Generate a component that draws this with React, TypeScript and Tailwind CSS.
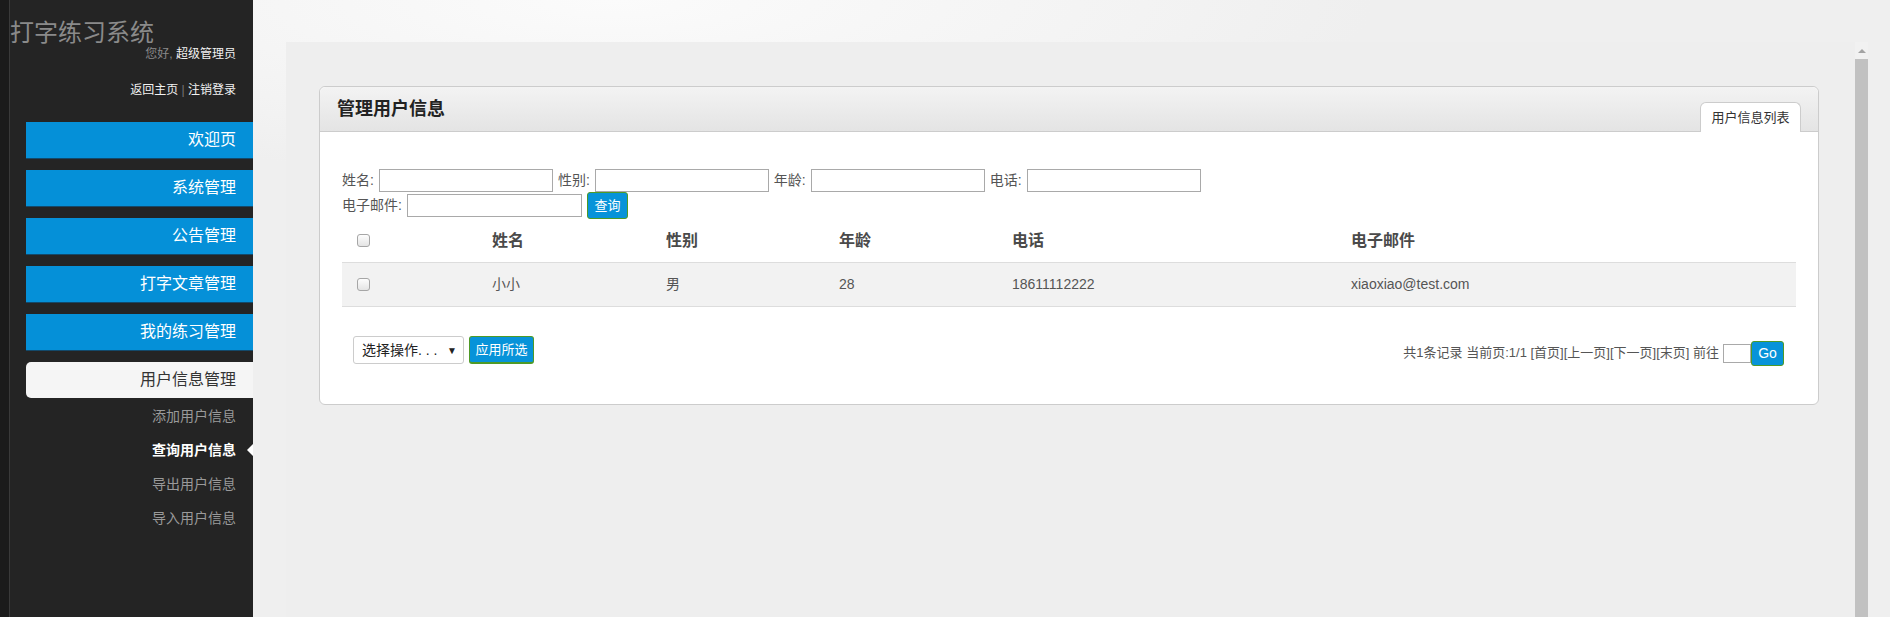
import React from "react";

const navItems = ["欢迎页", "系统管理", "公告管理", "打字文章管理", "我的练习管理"];
const subItems = [
  { label: "添加用户信息", active: false },
  { label: "查询用户信息", active: true },
  { label: "导出用户信息", active: false },
  { label: "导入用户信息", active: false },
];

const users = [
  { name: "小小", sex: "男", age: "28", phone: "18611112222", email: "xiaoxiao@test.com" },
];

function Sidebar() {
  return (
    <aside className="w-[253px] shrink-0 bg-[#1b1b1b] pl-[9px]">
      <div className="h-full border-l border-[#3a3a3a] bg-[#242424]">
        <div className="pt-[21px] text-[24px] leading-[24px] text-[#8a8a8a]">打字练习系统</div>
        <div className="mt-[2px] pr-[17px] text-right text-[12px] leading-[14px]">
          <span className="text-[#8a8a8a]">您好, </span>
          <span className="text-[#f2f2f2]">超级管理员</span>
        </div>
        <div className="mt-[22px] pr-[17px] text-right text-[12px] leading-[14px] text-[#f2f2f2]">
          <a href="#0">返回主页</a>
          <span className="text-[#777]"> | </span>
          <a href="#0">注销登录</a>
        </div>

        {/* main menu */}
        <nav className="mt-[25px] ml-[16px]">
          {navItems.map((item) => (
            <div
              key={item}
              className="mb-[11px] flex h-[37px] items-center justify-end border-b border-[#13496a] bg-[#0590d8] pr-[17px] text-[16px] text-white"
            >
              {item}
            </div>
          ))}
          <div className="flex h-[36px] items-center justify-end rounded-l-[5px] bg-[#f5f5f5] pr-[17px] text-[16px] text-[#333]">
            用户信息管理
          </div>
          <ul className="mt-[1px]">
            {subItems.map((s) => (
              <li
                key={s.label}
                className={`relative flex h-[34px] items-center justify-end pr-[17px] text-[14px] ${
                  s.active ? "font-bold text-white" : "text-[#9a9a9a]"
                }`}
              >
                {s.label}
                {s.active && (
                  <span className="absolute right-0 top-1/2 -translate-y-1/2 border-y-[6px] border-r-[6px] border-y-transparent border-r-white" />
                )}
              </li>
            ))}
          </ul>
        </nav>
      </div>
    </aside>
  );
}

function Checkbox() {
  return (
    <span className="inline-block h-[13px] w-[13px] rounded-[3px] border border-[#a6a6a6] bg-gradient-to-b from-[#fdfdfd] to-[#e4e4e4]" />
  );
}

function BlueButton({ children, className = "" }: { children: React.ReactNode; className?: string }) {
  return (
    <button
      className={`flex items-center justify-center rounded-[3px] border border-[#4f9a27] bg-[#0793d9] text-white ${className}`}
    >
      {children}
    </button>
  );
}

function Field({ label, first }: { label: string; first?: boolean }) {
  return (
    <>
      <span className={`${first ? "" : "ml-[5px]"} text-[14px] text-[#555]`}>{label}:</span>
      <input className="ml-[5px] h-[23px] w-[174px] border border-[#a9a9a9] bg-white" />
    </>
  );
}

function Panel() {
  return (
    <div className="w-[1500px] rounded-[6px] border border-[#cccccc] bg-white">
      <div className="flex h-[45px] items-center justify-between rounded-t-[6px] border-b border-[#cccccc] bg-gradient-to-b from-[#f3f3f3] to-[#e4e4e4] px-[17px]">
        <h2 className="text-[18px] font-bold text-[#222]">管理用户信息</h2>
        <div className="-mb-px flex h-[30px] w-[101px] items-center justify-center self-end rounded-t-[6px] border border-b-0 border-[#cccccc] bg-white text-[13px] text-[#333]">
          用户信息列表
        </div>
      </div>

      <div className="px-[22px] pt-[37px] pb-[39px]">
        {/* search form */}
        <div className="flex h-[23px] items-center">
          <Field label="姓名" first />
          <Field label="性别" />
          <Field label="年龄" />
          <Field label="电话" />
        </div>
        <div className="flex h-[27px] items-center">
          <span className="text-[14px] text-[#555]">电子邮件:</span>
          <input className="ml-[5px] h-[23px] w-[175px] border border-[#a9a9a9] bg-white" />
          <BlueButton className="ml-[5px] h-[27px] w-[41px] text-[13px]">查询</BlueButton>
        </div>

        {/* table */}
        <div className="grid grid-cols-[150px_174px_173px_173px_339px_1fr]">
          <div className="col-span-6 grid h-[44px] grid-cols-subgrid items-center border-b border-[#dddddd] text-[16px] font-bold text-[#4a4a4a]">
            <div className="flex pl-[15px]">
              <Checkbox />
            </div>
            <div>姓名</div>
            <div>性别</div>
            <div>年龄</div>
            <div>电话</div>
            <div>电子邮件</div>
          </div>
          {users.map((u) => (
            <div
              key={u.phone}
              className="col-span-6 grid h-[44px] grid-cols-subgrid items-center border-b border-[#dddddd] bg-[#f2f2f2] text-[14px] text-[#555]"
            >
              <div className="flex pl-[15px]">
                <Checkbox />
              </div>
              <div>{u.name}</div>
              <div>{u.sex}</div>
              <div>{u.age}</div>
              <div>{u.phone}</div>
              <div>{u.email}</div>
            </div>
          ))}
        </div>

        {/* actions + pager */}
        <div className="mt-[28px] flex h-[30px] items-center justify-between">
          <div className="flex items-center">
            <div className="ml-[11px] flex h-[28px] w-[111px] items-center justify-between rounded-[3px] border border-[#cccccc] bg-white pl-[8px] pr-[6px] text-[14px] text-[#222]">
              <span>选择操作. . .</span>
              <span className="text-[10px]">▼</span>
            </div>
            <BlueButton className="ml-[5px] h-[28px] w-[65px] border-b-2 text-[13px]">应用所选</BlueButton>
          </div>
          <div className="flex items-center pt-[6px] pr-[12px] text-[13px] text-[#555]">
            <span>共1条记录 当前页:1/1 [首页][上一页][下一页][末页] 前往</span>
            <input className="ml-[4px] h-[19px] w-[28px] border border-[#a9a9a9] bg-white" />
            <BlueButton className="h-[25px] w-[33px] text-[14px]">Go</BlueButton>
          </div>
        </div>
      </div>
    </div>
  );
}

function Scrollbar() {
  return (
    <div className="flex w-[13px] shrink-0 flex-col">
      <div className="flex h-[17px] items-center justify-center bg-[#f1f1f1]">
        <span className="border-x-[4px] border-b-[4px] border-x-transparent border-b-[#a3a3a3]" />
      </div>
      <div className="flex-1 bg-[#c1c1c1]" />
    </div>
  );
}

export default function App() {
  return (
    <div className="flex h-[617px] w-[1890px] overflow-hidden font-['Liberation_Sans','Noto_Sans_CJK_SC',sans-serif]">
      <Sidebar />
      <main className="flex-1 bg-[radial-gradient(ellipse_760px_180px_at_22%_0%,#fbfbfb,#f3f3f3_70%,#efefef)] pt-[42px] pl-[33px] pr-[22px]">
        <div className="flex h-full bg-[#eeeeee]">
          <div className="flex-1 pt-[44px] pl-[33px]">
            <Panel />
          </div>
          <Scrollbar />
        </div>
      </main>
    </div>
  );
}
